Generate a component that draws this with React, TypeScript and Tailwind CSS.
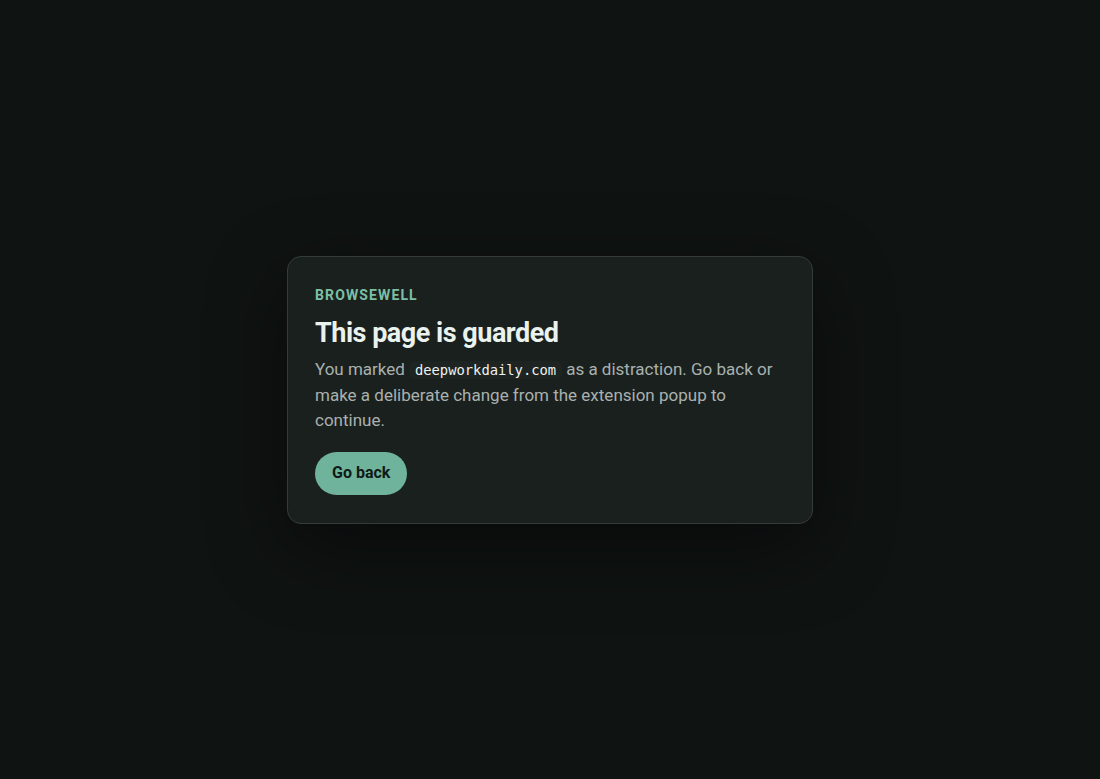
export default function App() {
  return (
    <div
      className="min-h-screen w-full bg-[#0f1312] flex items-center justify-center"
      style={{ fontFamily: 'Roboto, "Noto Sans", sans-serif' }}
    >
      <div className="w-[526px] rounded-[14px] border border-[#343c39] bg-[#1a201e] px-[27px] pt-[28px] pb-[28px] shadow-[0_24px_80px_rgba(0,0,0,0.45)]">
        <div className="text-[14px] font-bold tracking-[0.08em] text-[#7cbfa6] leading-[20px]">
          BROWSEWELL
        </div>
        <h1 className="mt-[10px] text-[27px] font-bold leading-[36px] tracking-[-0.018em] text-[#eaf2ee]">
          This page is guarded
        </h1>
        <p className="mt-[6px] text-[17px] leading-[25px] text-[#a9b1ae]">
          You marked
          <code
            className="mx-[4px] rounded-[6px] bg-[#1d2422] px-[6px] py-[1px] text-[13.8px] text-[#eef2f0]"
            style={{ fontFamily: '"DejaVu Sans Mono", monospace' }}
          >
            deepworkdaily.com
          </code>
          as a distraction. Go back or make a deliberate change from the extension popup to continue.
        </p>
        <button className="mt-[19px] h-[43px] rounded-full bg-[#70b39c] px-[17px] text-[16px] font-bold text-[#0f1a16]">
          Go back
        </button>
      </div>
    </div>
  );
}
